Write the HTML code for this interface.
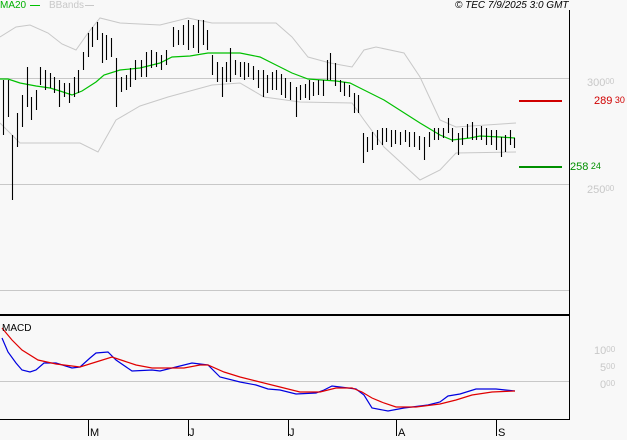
<!DOCTYPE html>
<html><head><meta charset="utf-8"><style>
html,body{margin:0;padding:0;background:#f8f8f8;}
body{width:627px;height:440px;overflow:hidden;position:relative;font-family:"Liberation Sans",sans-serif;}
.t{position:absolute;font-size:11px;line-height:11px;white-space:nowrap;}
.g{color:#c8c8c8}
sup{font-size:8px;vertical-align:top;line-height:8px}
</style></head><body>
<svg width="627" height="440" style="position:absolute;left:0;top:0" xmlns="http://www.w3.org/2000/svg">
<g stroke="#c8c8c8" stroke-width="1" fill="none">
<line x1="0" y1="78.5" x2="569" y2="78.5"/>
<line x1="0" y1="184.5" x2="569" y2="184.5"/>
<line x1="0" y1="290.5" x2="569" y2="290.5"/>
<line x1="0" y1="381.5" x2="569" y2="381.5"/>
<polyline points="0,37 16,27 30,25 48,33 62,44 76,50 88,33 100,18 120,23 160,25 188,18 212,23 276,23 292,37 308,57 330,63 352,67 364,50 376,47 404,53 420,77 440,120 456,127 516,123"/>
<polyline points="0,123 20,143 40,143 80,143 98,152 116,120 140,106 168,97 212,85 240,83 264,97 300,102 352,103 364,120 384,147 420,180 440,170 456,153 516,152"/>
</g>
<polyline fill="none" stroke="#00c000" stroke-width="1.2" points="0,79 8,79 20,83 36,86 50,88 60,91 72,95 82,91 96,82 104,75 120,70 140,68 160,63 172,57 190,56 208,53 240,53 260,57 276,65 292,73 308,79 336,81 350,83 360,88 384,100 420,123 440,135 452,140 470,138 480,136 500,137 515,138"/>
<path fill="none" stroke="#000" stroke-width="1.1" d="
M3.5 80V135M8.5 80V117M12.5 135V200M17.5 113V147M22.5 95V127M27.5 67V107M31.5 97V120M36.5 90V110M40.5 67V85M45.5 70V90M50.5 73V88M54.5 77V93M59.5 80V107M64.5 83V97M69.5 83V103M74.5 77V97M78.5 70V93M83.5 52V70M88.5 33V57M92.5 27V47M97.5 22V40M102.5 33V63M106.5 35V60M111.5 38V57M116.5 58V107M121.5 77V92M126.5 75V90M130.5 68V87M135.5 60V80M141.5 60V77M146.5 52V77M151.5 50V68M156.5 52V67M161.5 55V70M166.5 50V65M173.5 27V47M178.5 30V45M183.5 25V45M188.5 20V50M193.5 25V48M198.5 20V53M203.5 20V45M207.5 30V50M212.5 55V75M217.5 62V82M222.5 67V97M226.5 62V82M230.5 48V82M235.5 60V75M240.5 62V77M244.5 62V80M248.5 63V77M253.5 66V80M258.5 70V88M263.5 70V97M267.5 75V93M272.5 72V90M276.5 70V90M281.5 74V95M285.5 78V98M290.5 82V100M296.5 87V117M300.5 85V100M305.5 84V98M309.5 80V100M313.5 82V96M318.5 80V95M323.5 80V96M327.5 60V80M330.5 53V80M335.5 63V86M340.5 80V92M344.5 82V96M349.5 85V97M354.5 93V113M358.5 95V113M363.5 133V163M367.5 137V152M372.5 132V150M377.5 130V145M382.5 128V145M386.5 128V142M391.5 130V147M395.5 130V144M400.5 132V145M405.5 130V142M409.5 132V147M414.5 132V147M419.5 136V150M424.5 137V160M429.5 132V147M434.5 128V140M438.5 128V140M443.5 128V138M448.5 118V133M452.5 128V142M458.5 133V155M462.5 128V145M467.5 124V138M472.5 122V140M476.5 128V140M481.5 126V140M486.5 128V145M491.5 130V145M496.5 130V150M501.5 137V157M505.5 135V152M510.5 130V145M514.5 138V148
"/>
<line x1="519" y1="101" x2="562" y2="101" stroke="#d00000" stroke-width="2"/>
<line x1="519" y1="167" x2="562" y2="167" stroke="#009000" stroke-width="2"/>
<line x1="569.5" y1="10" x2="569.5" y2="420" stroke="#000" stroke-width="1"/>
<line x1="0" y1="315" x2="569" y2="315" stroke="#000" stroke-width="2"/>
<line x1="0" y1="419.5" x2="569" y2="419.5" stroke="#000" stroke-width="1"/>
<polyline fill="none" stroke="#0000e0" stroke-width="1.2" points="2,338 8,352 16,363 22,370 30,372 36,370 44,363 56,363 72,368 80,367 90,358 96,353 108,352 116,360 132,371 152,370 160,371 176,367 192,363 200,364 208,365 220,377 240,382 256,385 268,389 280,390 296,394 316,393 324,390 332,386 340,387 356,389 364,395 372,408 388,411 404,408 428,405 440,402 448,396 460,394 476,389 496,389 515,391"/>
<polyline fill="none" stroke="#e00000" stroke-width="1.2" points="2,328 12,340 22,350 38,360 56,364 80,367 96,362 112,357 124,361 136,365 152,368 168,368 184,368 200,365 208,365 224,372 240,377 256,381 280,387 300,392 320,392 336,388 352,388 362,392 372,398 384,403 396,407 416,407 440,404 456,400 472,395 492,392 515,391"/>
<g stroke="#000" stroke-width="1">
<line x1="88.5" y1="420" x2="88.5" y2="436"/>
<line x1="188.5" y1="420" x2="188.5" y2="436"/>
<line x1="288.5" y1="420" x2="288.5" y2="436"/>
<line x1="396.5" y1="420" x2="396.5" y2="436"/>
<line x1="496.5" y1="420" x2="496.5" y2="436"/>
</g>
<line x1="30" y1="5.5" x2="40" y2="5.5" stroke="#00c000" stroke-width="1"/>
<line x1="85" y1="5.5" x2="94" y2="5.5" stroke="#c8c8c8" stroke-width="1"/>
</svg>
<div class="t" style="left:0;top:0;color:#00b000;font-size:10px">MA20</div>
<div class="t g" style="left:49px;top:0;font-size:10px">BBands</div>
<div class="t" style="left:455px;top:0;font-style:italic;font-size:10px;color:#000">© TEC 7/9/2025 3:0 GMT</div>
<div class="t g" style="left:587px;top:78px">300<sup>00</sup></div>
<div class="t" style="left:594px;top:96px;color:#d00000">289<sup style="font-size:9px"> 30</sup></div>
<div class="t" style="left:570px;top:162px;color:#009000">258<sup style="font-size:9px"> 24</sup></div>
<div class="t g" style="left:587px;top:185px">250<sup>00</sup></div>
<div class="t" style="left:2px;top:323px;font-size:10px;color:#000">MACD</div>
<div class="t g" style="left:594px;top:346px">10<sup>00</sup></div>
<div class="t g" style="left:600px;top:363px">5<sup>00</sup></div>
<div class="t g" style="left:600px;top:380px">0<sup>00</sup></div>
<div class="t" style="left:90px;top:428px;font-size:11px">M</div>
<div class="t" style="left:189px;top:428px;font-size:11px">J</div>
<div class="t" style="left:289px;top:428px;font-size:11px">J</div>
<div class="t" style="left:398px;top:428px;font-size:11px">A</div>
<div class="t" style="left:498px;top:428px;font-size:11px">S</div>
</body></html>
